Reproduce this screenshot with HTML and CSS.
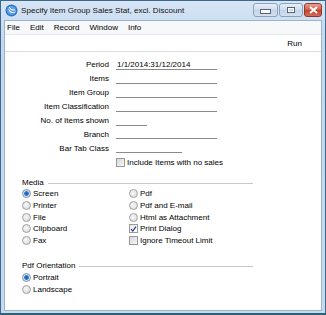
FILE: index.html
```html
<!DOCTYPE html>
<html>
<head>
<meta charset="utf-8">
<link rel="stylesheet" href="styles.css">
</head>
<body>
<div class="window">
  <div class="titlebar">
    <svg class="appicon" width="13" height="13" viewBox="0 0 13 13">
      <circle cx="6.5" cy="6.5" r="6" fill="#2f74c4"/>
      <circle cx="6.5" cy="6.5" r="4.6" fill="#5aa0e6"/>
      <path d="M3.2 4.2 C3.8 9 8.5 10.6 11 7.6 C8.2 9.2 5.4 7.8 3.2 4.2 Z" fill="#fff"/>
      <path d="M4.2 3.2 C5.6 5.4 7.6 6.4 9.8 5.8" stroke="#fff" stroke-width="1.2" fill="none"/>
    </svg>
    <span class="title">Specify Item Group Sales Stat, excl. Discount</span>
    <div class="winbtns">
      <div class="wbtn min"><span class="minbar"></span></div>
      <div class="wbtn max"><span class="maxbox"></span></div>
      <div class="wbtn close">
        <svg width="9" height="8" viewBox="0 0 9 8"><path d="M1 1 L8 7 M8 1 L1 7" stroke="#fff" stroke-width="2"/></svg>
      </div>
    </div>
  </div>
  <div class="client">
    <div class="menubar">
      <span>File</span><span>Edit</span><span>Record</span><span>Window</span><span>Info</span>
    </div>
    <div class="toolbar"><span class="run">Run</span></div>
    <div class="content">
      <div class="form">
        <label>Period</label><div class="field full"><span class="val">1/1/2014:31/12/2014</span></div>
        <label>Items</label><div class="field full"></div>
        <label>Item Group</label><div class="field full"></div>
        <label>Item Classification</label><div class="field full"></div>
        <label>No. of Items shown</label><div class="field short"></div>
        <label>Branch</label><div class="field full"></div>
        <label>Bar Tab Class</label><div class="field mid"></div>
        <span></span><div class="check"><span class="cb"></span>Include Items with no sales</div>
      </div>
      <div class="group media">
        <div class="ghead"><span>Media</span><span class="gline"></span></div>
        <div class="cols">
          <div class="col">
            <div class="opt"><span class="rb on"></span>Screen</div>
            <div class="opt"><span class="rb"></span>Printer</div>
            <div class="opt"><span class="rb"></span>File</div>
            <div class="opt"><span class="rb"></span>Clipboard</div>
            <div class="opt"><span class="rb"></span>Fax</div>
          </div>
          <div class="col right">
            <div class="opt"><span class="rb"></span>Pdf</div>
            <div class="opt"><span class="rb"></span>Pdf and E-mail</div>
            <div class="opt"><span class="rb"></span>Html as Attachment</div>
            <div class="opt"><span class="cb checked"><svg width="8" height="8" viewBox="0 0 8 8"><path d="M1.2 4.2 L3.2 6.4 L6.8 1.2" stroke="#2b3f8f" stroke-width="1.4" fill="none"/></svg></span>Print Dialog</div>
            <div class="opt"><span class="cb"></span>Ignore Timeout Limit</div>
          </div>
        </div>
      </div>
      <div class="group orient">
        <div class="ghead"><span>Pdf Orientation</span><span class="gline"></span></div>
        <div class="col">
          <div class="opt"><span class="rb on"></span>Portrait</div>
          <div class="opt"><span class="rb"></span>Landscape</div>
        </div>
      </div>
    </div>
  </div>
</div>
</body>
</html>
```
FILE: styles.css
```css
html, body {
  margin: 0;
  padding: 0;
}
body {
  width: 326px;
  height: 315px;
  overflow: hidden;
  font-family: "Liberation Sans", Arial, sans-serif;
  font-size: 8px;
  color: #000;
}
.window {
  width: 326px;
  height: 315px;
  box-sizing: border-box;
  border: 1px solid #3b6a8e;
  border-bottom: 2px solid #2d6277;
  background: linear-gradient(#d7e5f5, #c4d8ef 40px, #c6daf0);
  display: flex;
  flex-direction: column;
  padding: 0 3px 2px 3px;
}
.titlebar {
  height: 19px;
  display: flex;
  align-items: center;
  flex: none;
}
.appicon {
  margin-left: 1px;
  margin-right: 3px;
  flex: none;
}
.title {
  font-size: 8.1px;
  color: #111;
  white-space: nowrap;
}
.winbtns {
  margin-left: auto;
  display: flex;
  align-self: flex-start;
  margin-top: 2px;
  gap: 1px;
}
.wbtn {
  height: 14px;
  box-sizing: border-box;
  border: 1px solid #8aa2bd;
  border-radius: 3px;
  background: linear-gradient(#e7eef7, #cfdcec 50%, #c3d3e7 51%, #d3e0ef);
  display: flex;
  align-items: center;
  justify-content: center;
}
.min { width: 25px; }
.max { width: 24px; }
.close {
  width: 18px;
  border-color: #8c3a2e;
  background: linear-gradient(#e8a093, #d35a45 50%, #c4402b 51%, #d46a55);
}
.minbar {
  width: 9px;
  height: 3px;
  background: #fff;
  border: 1px solid #52647c;
  margin-top: 3px;
}
.maxbox {
  width: 6px;
  height: 4px;
  border: 1px solid #52647c;
  box-shadow: inset 0 0 0 1px #fff;
}
.client {
  flex: 1;
  background: #fff;
  border: 1px solid #9bb3cf;
  display: flex;
  flex-direction: column;
}
.menubar {
  height: 13px;
  background: #f7f8fa;
  display: flex;
  align-items: center;
  gap: 10px;
  padding-left: 2px;
  border-bottom: 1px solid #e6eaf0;
}
.toolbar {
  height: 16px;
  display: flex;
  align-items: center;
  justify-content: flex-end;
  padding-right: 19px;
  border-bottom: 1px solid #dcdcdc;
}
.content {
  padding-top: 6px;
  flex: 1;
}
.form {
  display: grid;
  grid-template-columns: 104px 120px;
  column-gap: 7px;
  grid-auto-rows: 13.9px;
  align-items: center;
}
.form label {
  text-align: right;
  white-space: nowrap;
}
.field {
  height: 10px;
  border-bottom: 1px solid #8a8a8a;
  display: flex;
  align-items: flex-end;
  padding-left: 1px;
  box-sizing: border-box;
}
.full { width: 101px; }
.short { width: 31px; }
.mid { width: 66px; }
.val { line-height: 9px; }
.check, .opt {
  display: flex;
  align-items: center;
  white-space: nowrap;
}
.cb {
  flex: none;
  width: 9px;
  height: 9px;
  box-sizing: border-box;
  border: 1px solid #9a9a9a;
  background: linear-gradient(135deg, #d8d8d8, #f6f6f6);
  margin-right: 2px;
  display: inline-flex;
  align-items: center;
  justify-content: center;
}
.cb.checked {
  background: linear-gradient(135deg, #e8e8e8, #ffffff);
}
.group {
  padding-left: 17px;
}
.media {
  margin-top: 7px;
}
.orient {
  margin-top: 13px;
}
.ghead {
  display: flex;
  align-items: center;
  height: 12px;
  width: 231px;
}
.gline {
  flex: 1;
  height: 1px;
  background: #c8c8c8;
  margin-left: 4px;
  margin-top: 3px;
}
.cols {
  display: flex;
}
.col {
  display: flex;
  flex-direction: column;
}
.cols .col:first-child {
  width: 107px;
}
.opt {
  height: 11.6px;
}
.orient .opt {
  height: 12px;
}
.rb {
  flex: none;
  width: 9px;
  height: 9px;
  box-sizing: border-box;
  border-radius: 50%;
  border: 1px solid #a0a0a0;
  background: radial-gradient(circle at 40% 40%, #f8f8f8, #d6d6d6);
  margin-right: 2px;
}
.rb.on {
  border-color: #7a8ea6;
  background: radial-gradient(circle, #1f5fa8 0, #2e78c8 2px, #cfe0f2 2.6px, #e8eef6 4px);
}
```
